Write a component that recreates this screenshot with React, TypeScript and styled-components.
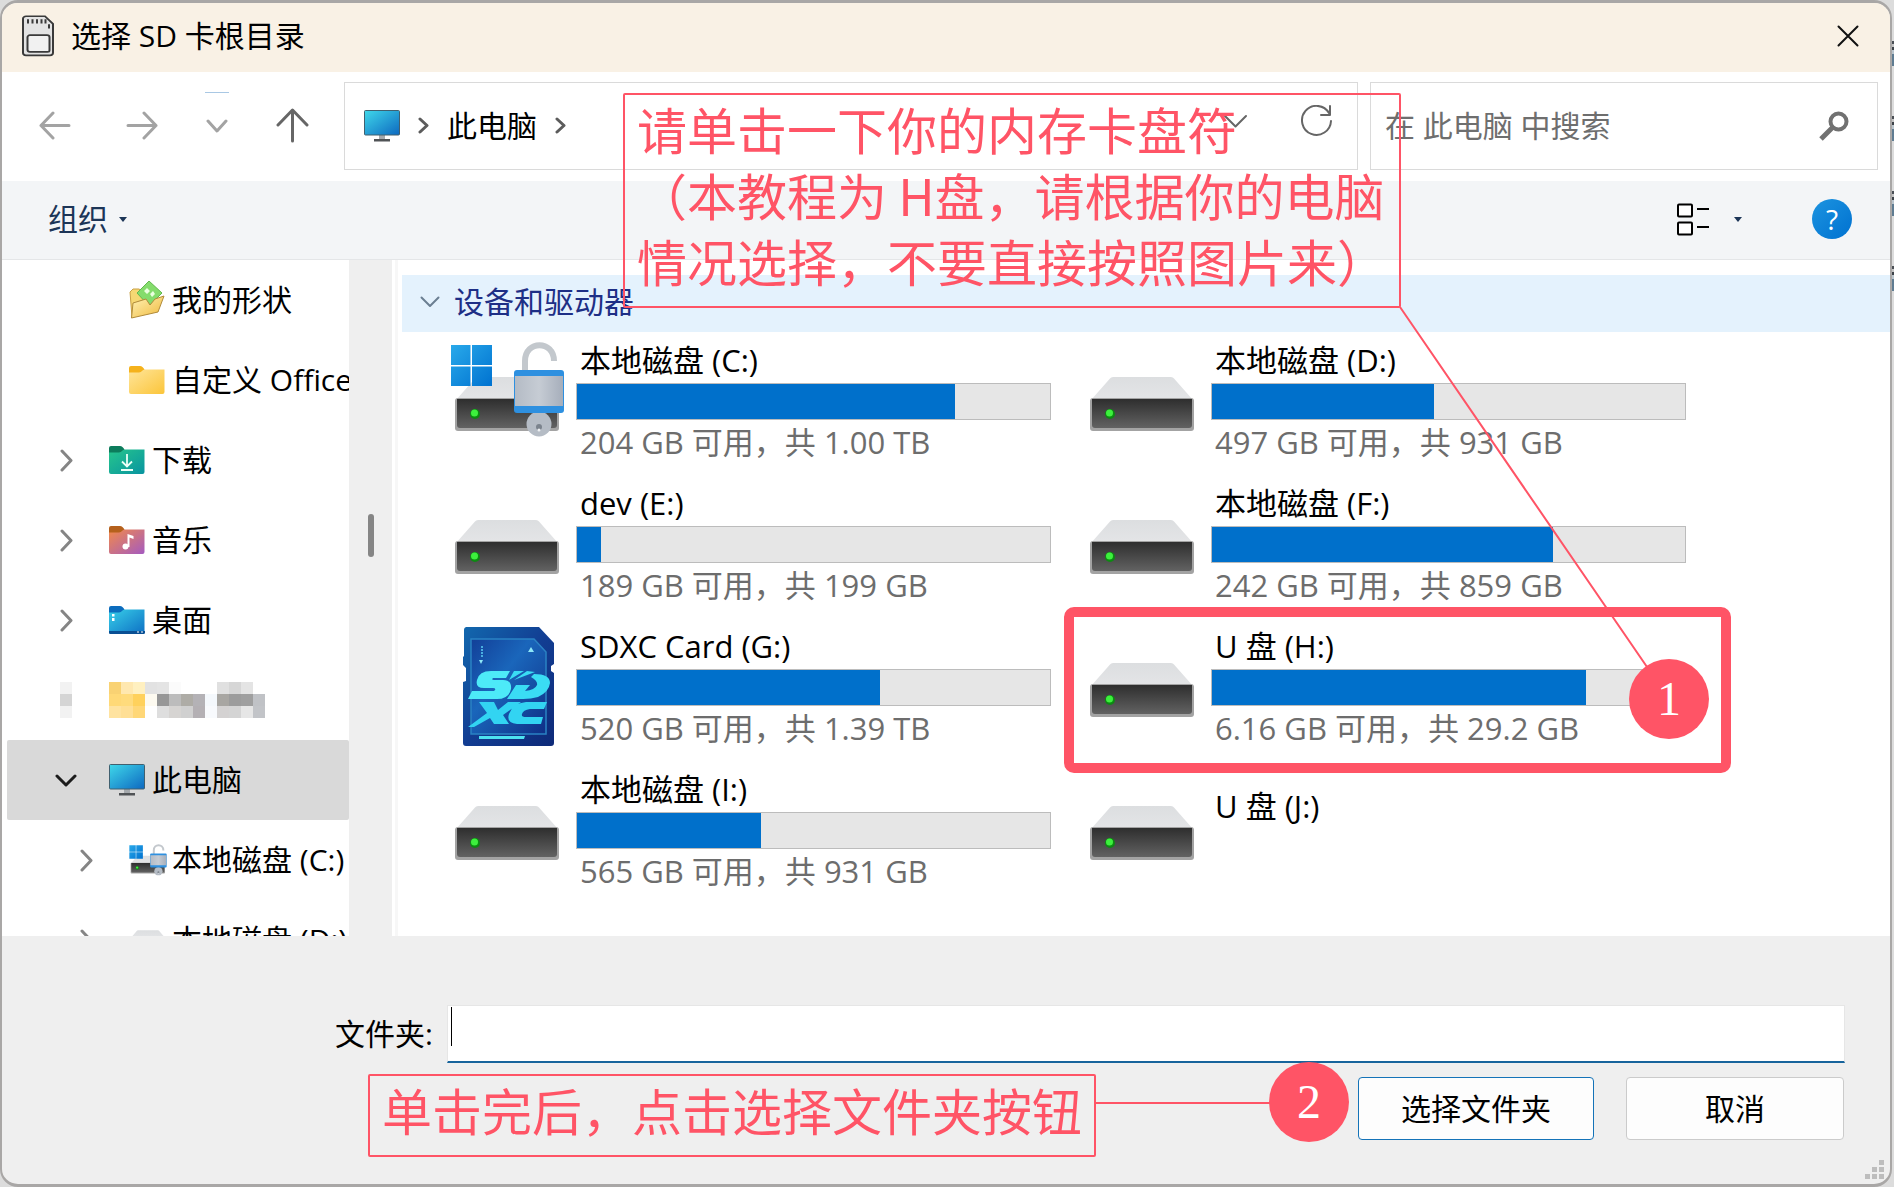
import React from "react";
import styled, { createGlobalStyle } from "styled-components";

const GlobalStyle = createGlobalStyle`
  * { box-sizing: border-box; }
  body {
    margin: 0;
    background:
      repeating-linear-gradient(180deg, transparent 0 41px, #4a4f55 41px 44px, #c4c4c4 44px 47px, #3c4248 47px 50px, #b9c4cc 50px 54px, #5f7c92 54px 66px, transparent 66px 75px) 0 0 / 100% 300px no-repeat,
      #dcdcdc;
    color: #000;
    font-family: "Open Sans", "Noto Sans CJK SC", sans-serif;
    font-size: 30px;
    line-height: 36px;
  }
  button, input { font: inherit; color: inherit; }
  svg { display: block; flex: none; }
`;

const RED = "#ff5466";

const Dialog = styled.main`
  position: relative;
  display: flex;
  flex-direction: column;
  height: 100vh;
  margin-right: 2px;
  border: 3px solid #a9a7a6;
  border-left-width: 2px;
  border-right-width: 2px;
  border-radius: 18px;
  background: #efefef;
  overflow: hidden;
`;

const TitleBar = styled.header`
  display: flex;
  align-items: center;
  gap: 16px;
  height: 69px;
  flex: none;
  padding: 0 31px 3px 20px;
  background: #f9f1e5;
`;

const Title = styled.h1`
  flex: 1;
  margin: 0;
  font-size: 30px;
  font-weight: 400;
`;

const IconButton = styled.button`
  display: flex;
  align-items: center;
  justify-content: center;
  flex: none;
  padding: 0;
  border: 0;
  background: transparent;
`;

const NavRow = styled.div`
  display: flex;
  align-items: center;
  gap: 12px;
  height: 109px;
  flex: none;
  padding: 0 12px 2px 36px;
  background: #fff;
`;

const NavButtons = styled.nav`
  display: grid;
  grid-template-columns: 88px 79px 71px 33px;
  align-items: center;
  justify-items: start;
  margin-right: 23px;
`;

const RecentButton = styled(IconButton)`
  height: 68px;
  border-top: 1px solid #a9c8e4;
`;

const FieldBox = styled.div`
  display: flex;
  align-items: center;
  height: 88px;
  border: 1px solid #dadada;
  background: #fff;
`;

const AddressBox = styled(FieldBox)`
  flex: 1;
  min-width: 0;
  padding: 0 24px 0 19px;
  gap: 18px;
`;

const AddressTools = styled.div`
  display: flex;
  gap: 52px;
  margin-left: auto;
  padding-bottom: 8px;
`;

const SearchBox = styled(FieldBox)`
  flex: 0 1 508px;
  min-width: 0;
  padding: 0 28px 0 14px;
`;

const SearchInput = styled.input`
  flex: 1;
  min-width: 0;
  padding: 0;
  border: 0;
  outline: 0;
  background: transparent;
  &::placeholder { color: #6e6e6e; opacity: 1; }
`;

const Toolbar = styled.div`
  display: flex;
  align-items: center;
  height: 79px;
  flex: none;
  padding: 0 38px 2px 46px;
  border-bottom: 1px solid #e4e6e8;
  background: #f3f5f7;
  color: #1c3557;
`;

const ToolButton = styled(IconButton)`
  gap: 11px;
`;

const ToolbarRight = styled.div`
  display: flex;
  align-items: center;
  gap: 70px;
  margin-left: auto;
`;

const ViewButton = styled(IconButton)`
  gap: 24px;
`;

const HelpButton = styled(IconButton)`
  width: 40px;
  height: 40px;
  border-radius: 50%;
  background: linear-gradient(135deg, #1c94e0, #0071d0);
  color: #fff;
  font-size: 28px;
`;

const Browser = styled.div`
  display: flex;
  flex: 1;
  min-height: 0;
  background: #fff;
`;

const Sidebar = styled.aside`
  width: 347px;
  flex: none;
  padding-left: 5px;
  overflow: hidden;
`;

const TreeRow = styled.button<{ $level: number; $selected?: boolean }>`
  display: flex;
  align-items: center;
  width: 100%;
  height: 80px;
  padding: 0 0 0 ${(p) => (p.$level === 2 ? 68 : 48)}px;
  border: 0;
  border-radius: 2px;
  background: ${(p) => (p.$selected ? "#d9d9d9" : "transparent")};
  text-align: left;
  white-space: nowrap;
  overflow: hidden;
`;

const ExpanderSlot = styled.span`
  display: flex;
  justify-content: center;
  width: 22px;
  margin-right: 32px;
  flex: none;
`;

const TreeIconSlot = styled.span`
  display: flex;
  width: 43px;
  flex: none;
`;

const ScrollTrack = styled.div`
  display: flex;
  justify-content: center;
  width: 43px;
  flex: none;
  padding-top: 254px;
  background: #efefef;
`;

const ScrollThumb = styled.div`
  width: 6px;
  height: 43px;
  border-radius: 3px;
  background: #858585;
`;

const Content = styled.section`
  flex: 1;
  min-width: 0;
  margin-left: 3px;
  padding: 15px 0 0 4px;
  border-left: 3px solid #f7f7f7;
`;

const GroupHeader = styled.button`
  display: flex;
  align-items: center;
  gap: 14px;
  width: 100%;
  height: 57px;
  padding: 0 18px 3px;
  border: 0;
  background: #e4f2fd;
  color: #1e2f86;
`;

const DriveGrid = styled.ul`
  display: grid;
  grid-template-columns: repeat(auto-fill, 635px);
  grid-auto-rows: 143px;
  margin: 0;
  padding: 8px 0 0 46px;
  list-style: none;
`;

const DriveTile = styled.li`
  position: relative;
  display: flex;
  align-items: flex-start;
  gap: 8px;
`;

const DriveIconSlot = styled.span`
  display: flex;
  flex: none;
  width: 120px;
  height: 120px;
`;

const DriveBody = styled.div<{ $labelOnly?: boolean }>`
  display: flex;
  flex-direction: column;
  padding-top: ${(p) => (p.$labelOnly ? 19 : 2)}px;
  font-size: 31px;
`;

const DriveText = styled.span<{ $muted?: boolean }>`
  padding-left: 4px;
  color: ${(p) => (p.$muted ? "#6d6d6d" : "#000")};
  white-space: nowrap;
`;

const Bar = styled.div`
  width: 475px;
  height: 37px;
  margin: 5px 0 4px;
  border: 1px solid #bcbcbc;
  background: #e6e6e6;
`;

const BarFill = styled.div`
  height: 100%;
  background: #0070cb;
`;

const TileHighlight = styled.div`
  position: absolute;
  left: -19px;
  top: -19px;
  width: 667px;
  height: 166px;
  border: 10px solid ${RED};
  border-radius: 10px;
`;

const Footer = styled.footer`
  display: flex;
  flex-direction: column;
  gap: 14px;
  height: 248px;
  flex: none;
  padding: 69px 45px 0 333px;
`;

const FolderRow = styled.div`
  display: flex;
  align-items: center;
  gap: 14px;
`;

const FolderLabel = styled.label`
  width: 98px;
  flex: none;
  white-space: nowrap;
`;

const FolderField = styled.div`
  position: relative;
  flex: 1;
`;

const FolderInput = styled.input`
  display: block;
  width: 100%;
  height: 58px;
  padding: 0 4px;
  border: 1px solid #e6e6e6;
  border-bottom: 2px solid #17649c;
  border-radius: 0;
  outline: 0;
  background: #fff;
`;

const TextCursor = styled.span`
  position: absolute;
  left: 4px;
  top: 2px;
  width: 1px;
  height: 39px;
  background: #000;
`;

const Actions = styled.div`
  display: flex;
  justify-content: flex-end;
  gap: 32px;
  padding-right: 1px;
`;

const ActionButton = styled.button<{ $primary?: boolean }>`
  width: ${(p) => (p.$primary ? 236 : 218)}px;
  height: 63px;
  padding: 0;
  border: 1px solid ${(p) => (p.$primary ? "#1473b8" : "#cbcbcb")};
  border-radius: 4px;
  background: #fdfdfd;
`;

const Grip = styled.svg`
  position: absolute;
  right: 6px;
  bottom: 5px;
`;

const Note = styled.p<{ $x: number; $y: number; $w: number }>`
  position: absolute;
  left: ${(p) => p.$x}px;
  top: ${(p) => p.$y}px;
  width: ${(p) => p.$w}px;
  margin: 0;
  padding: 0 0 13px 12px;
  border: 2px solid ${RED};
  border-radius: 2px;
  color: ${RED};
  font-family: "Noto Sans CJK SC", sans-serif;
  font-size: 50px;
  line-height: 66px;
  white-space: pre;
  pointer-events: none;
`;

const Connector = styled.svg`
  position: absolute;
  left: 0;
  top: 0;
  pointer-events: none;
`;

const Step = styled.span<{ $x: number; $y: number }>`
  position: absolute;
  left: ${(p) => p.$x}px;
  top: ${(p) => p.$y}px;
  display: flex;
  align-items: center;
  justify-content: center;
  width: 80px;
  height: 80px;
  border-radius: 50%;
  background: ${RED};
  color: #fff;
  font-family: "Liberation Serif", serif;
  font-size: 48px;
`;

const Stroke = ({ w, h, d, color, sw = 3 }: { w: number; h: number; d: string; color: string; sw?: number }) => (
  <svg width={w} height={h} viewBox={`0 0 ${w} ${h}`} fill="none" stroke={color} strokeWidth={sw} strokeLinecap="round" strokeLinejoin="round">
    <path d={d} />
  </svg>
);

const Caret = () => (
  <svg width="8" height="5" viewBox="0 0 8 5"><path d="M0 0h8L4 5z" fill="#1c3557" /></svg>
);

const MemoryCardIcon = () => (
  <svg width="33" height="42" viewBox="0 0 33 50" preserveAspectRatio="none" fill="#f1f1f1" stroke="#3a3a3a" strokeWidth="2">
    <path d="M4 1.500h19l8 9V45a3 3 0 0 1-3 3H4a3 3 0 0 1-3-3V4.500a3 3 0 0 1 3-3z" fill="#e3e3e3" />
    <path d="M6 5v5M10.500 5v5M15 5v5M19.500 5v5M23.500 5v5M27 11v5" />
    <path d="M8 24h17a2.500 2.500 0 0 1 2.500 2.500V42a2 2 0 0 1-2 2H8a2.500 2.500 0 0 1-2.500-2.500v-15A2.500 2.500 0 0 1 8 24z" />
  </svg>
);

const MonitorIcon = () => (
  <svg width="36" height="32" viewBox="0 0 36 32">
    <defs>
      <linearGradient id="screen" x1="0" y1="0" x2="1" y2="1">
        <stop offset="0" stopColor="#3fd8ea" /><stop offset="1" stopColor="#0d68c0" />
      </linearGradient>
    </defs>
    <path d="M15 25h6v5h-6z" fill="#a5a9ad" />
    <rect x="0.5" y="0.5" width="35" height="24.5" rx="1" fill="url(#screen)" stroke="#41606f" />
    <path d="M10 29h16v2.500H10z" fill="#505356" />
  </svg>
);

const FolderIcon = ({ id, tab, from, to, children }: { id: string; tab: string; from: string; to: string; children?: React.ReactNode }) => (
  <svg width="36" height="28" viewBox="0 0 36 28">
    <defs>
      <linearGradient id={id} x1="0" y1="0" x2="1" y2="1">
        <stop offset="0" stopColor={from} /><stop offset="1" stopColor={to} />
      </linearGradient>
    </defs>
    <path d="M0 2a2 2 0 0 1 2-2h9c2 0 3 1.500 4.500 3.500V7H0z" fill={tab} />
    <path d="M0 6.500h10c3 0 3-3 6-3h19.500V26a2 2 0 0 1-2 2H2a2 2 0 0 1-2-2z" fill={`url(#${id})`} />
    {children}
  </svg>
);

const ShapesIcon = () => (
  <svg width="36" height="38" viewBox="0 0 36 38">
    <defs>
      <linearGradient id="shapes" x1="0" y1="0" x2="1" y2="1">
        <stop offset="0" stopColor="#fff3b8" /><stop offset="1" stopColor="#f0b93c" />
      </linearGradient>
    </defs>
    <path d="M1 11l3-3h6l3 2 12 2v18L3 36z" fill="#f6d873" stroke="#c9a044" />
    <path d="M20 0l13 12-13 13L8 12z" fill="#84dc6c" stroke="#62b84d" />
    <path d="M15 10l3-3 3 3-3 3zM21 13l3-3 2 3-3 3z" fill="#eaffdf" />
    <path d="M4 22l13-4 4 6 5-6 9-3-6 16L2.500 37z" fill="url(#shapes)" stroke="#b08a3a" />
  </svg>
);

const MosaicIcon = () => {
  const rows = [
    ["#f9d273", "#ffe8b0", "#fff0c0", "#e2e2e2", "#e4e4e4", "#fbfbfb", "#fff", "#fff", "#fff", "#e0e0e0", "#d6d6d6", "#e4e4e4", "#fff"],
    ["#ffd977", "#ffdb7c", "#ffd15c", "#fdfaf0", "#979797", "#bcbcbc", "#aeaca6", "#b4b2b6", "#f4f8fc", "#a8a6a2", "#9c9c9c", "#9f9f9f", "#c0c2c6"],
    ["#ffe3a0", "#ffdf95", "#ffd777", "#fff", "#dedede", "#d6d4d2", "#d0d0d0", "#b4b0b4", "#f8fafd", "#d4d2d2", "#d4d4d4", "#e6e6e6", "#c2c4c8"],
  ];
  return (
    <svg width="156" height="36" viewBox="0 0 156 36" shapeRendering="crispEdges">
      {rows.map((row, y) => row.map((c, x) => <rect key={`${x}-${y}`} x={x * 12} y={y * 12} width="12" height="12" fill={c} />))}
    </svg>
  );
};

const MosaicArrow = () => (
  <svg width="12" height="36" viewBox="0 0 12 36">
    <path d="M0 0h12v36H0z" fill="#f2f2f2" /><path d="M0 12h12v12H0z" fill="#d5d5d5" />
  </svg>
);

const HiddenDefs = styled.svg`
  position: absolute;
`;

const DriveDefs = () => (
  <HiddenDefs width="0" height="0">
    <defs>
      <linearGradient id="driveTop" x1="0" y1="0" x2="0" y2="1">
        <stop offset="0" stopColor="#dcdee0" /><stop offset="1" stopColor="#e4e5e7" />
      </linearGradient>
      <linearGradient id="driveFront" x1="0" y1="0" x2="0" y2="1">
        <stop offset="0" stopColor="#2e2e2e" /><stop offset="1" stopColor="#626262" />
      </linearGradient>
      <linearGradient id="winTile" x1="0" y1="0" x2="1" y2="1">
        <stop offset="0" stopColor="#29a9ea" /><stop offset="1" stopColor="#0072d0" />
      </linearGradient>
      <linearGradient id="lockBody" x1="0" y1="0" x2="1" y2="0">
        <stop offset="0" stopColor="#b4bbc5" /><stop offset="0.5" stopColor="#c6ccd4" /><stop offset="1" stopColor="#a6aebb" />
      </linearGradient>
      <linearGradient id="cardBody" x1="0" y1="0" x2="1" y2="1">
        <stop offset="0" stopColor="#1268ae" /><stop offset="0.5" stopColor="#123d92" /><stop offset="1" stopColor="#0e2a78" />
      </linearGradient>
      <linearGradient id="cardFace" x1="0" y1="0" x2="1" y2="1">
        <stop offset="0" stopColor="#123f98" /><stop offset="0.4" stopColor="#1a66bb" /><stop offset="1" stopColor="#0f2f86" />
      </linearGradient>
    </defs>
  </HiddenDefs>
);

const DriveShape = () => (
  <g>
    <path d="M30 37h58q2 0 3 1.500L110 60H8L27 38.500q1-1.500 3-1.500z" fill="url(#driveTop)" />
    <rect x="7" y="58" width="104" height="33" rx="3" fill="#a3a3a3" />
    <path d="M9 59h100v26a3 3 0 0 1-3 3H12a3 3 0 0 1-3-3z" fill="url(#driveFront)" />
    <circle cx="27" cy="74" r="5" fill="#0d8a12" /><circle cx="26.500" cy="73" r="3.500" fill="#3df03d" />
  </g>
);

const DriveIcon = () => <svg width="120" height="120" viewBox="0 0 120 120"><DriveShape /></svg>;

const SystemDriveIcon = ({ width = 120, height = 120, box = "0 0 120 120" }: { width?: number; height?: number; box?: string }) => (
  <svg width={width} height={height} viewBox={box}>
    <DriveShape />
    <path d="M3 5h19.500v20H3zM24 5h20v20H24zM3 26.500h19.500V46H3zM24 26.500h20V46H24z" fill="url(#winTile)" />
    <path d="M77 32V21c0-21 29-21 29 0" fill="none" stroke="#c3c8cd" strokeWidth="6" />
    <circle cx="91" cy="84" r="12.500" fill="#b5bcc5" /><circle cx="91" cy="87" r="3" fill="#7b838d" /><circle cx="91" cy="90" r="1.500" fill="#eef0f2" />
    <rect x="66" y="30" width="50" height="43" rx="3" fill="#2e90e0" />
    <path d="M67 36h48v30H67z" fill="url(#lockBody)" />
  </svg>
);

const SdxcIcon = () => (
  <svg width="120" height="130" viewBox="0 0 120 130">
    <path d="M18 1h73l15 16v21l-3 2v5l3 2v70a3 3 0 0 1-3 3H18a3 3 0 0 1-3-3V56l3-1V42l-3-3V31l1-1V4a3 3 0 0 1 2-3z" fill="url(#cardBody)" />
    <path d="M23 13h63l12 13v82H23z" fill="url(#cardFace)" stroke="#2a82c4" strokeWidth="1.500" />
    <path d="M31 34l2 4 2-4zM80 26l3-5 3 5z" fill="#8fe8f8" />
    <path d="M34 20v12" stroke="#49aee0" strokeWidth="2" strokeDasharray="2 1" />
    <path d="M62 45H43q-12 0-14 9-2 8 7 8h9q3 0 2 2l-1 1H24l-4 8h29q12 0 14-10 1-9-8-9h-9q-3 0-1-2h13z" fill="#4deaf8" />
    <path d="M66 45l-5 9 15-9zM79 45l-13 9 21-8zM86 48q16 0 16 9-1 9-12 14-7 2-15 2H59l9-14h14l-5 6q10-1 12-6 1-4-6-8z" fill="#3adcf4" />
    <path d="M31 76h15l4 8 10-8h13L55 89l6 9H46l-4-6-16 9h-6l19-14zM99 76l-3 7H82q-7 1-8 5-1 3 4 3h17l-2 7H69q-11-1-8-10 4-11 17-12z" fill="#32d4f2" />
    <path d="M31 110h46l-1 3H31z" fill="#4de2f0" />
  </svg>
);

type TreeItem = { label: string; level: number; icon: React.ReactNode; expander?: React.ReactNode; selected?: boolean };

const closed = <Stroke w={13} h={23} d="M2 2l9 9.500-9 9.500" color="#858585" />;

const tree: TreeItem[] = [
  { label: "我的形状", level: 2, icon: <ShapesIcon /> },
  { label: "自定义 Office", level: 2, icon: <FolderIcon id="plain" tab="#f5b21c" from="#ffe59a" to="#fbc53a" /> },
  {
    label: "下载", level: 1, expander: closed,
    icon: (
      <FolderIcon id="downloads" tab="#0d7c5c" from="#27c68c" to="#0894a0">
        <path d="M18 8v12M13 15.500l5 5 5-5M12 24h12" fill="none" stroke="#eafff6" strokeWidth="1.800" />
      </FolderIcon>
    ),
  },
  {
    label: "音乐", level: 1, expander: closed,
    icon: (
      <FolderIcon id="music" tab="#b5611c" from="#f28a4a" to="#a45ac0">
        <circle cx="16.500" cy="20.500" r="3" fill="#fff" /><path d="M18.500 21V8l6 2v3l-4-1.500V21z" fill="#fff" />
      </FolderIcon>
    ),
  },
  {
    label: "桌面", level: 1, expander: closed,
    icon: (
      <FolderIcon id="desktop" tab="#0c6cbd" from="#38cfe8" to="#0d6fc4">
        <path d="M3 8h2.500v2.500H3zM3 12h2.500v3H3z" fill="#fff" />
        <path d="M0 25h36v1.500q0 1.500-1.500 1.500h-33Q0 28 0 26.500z" fill="#0a4f93" />
        <path d="M28 25.500h2v1h-2zM32 25.500h2v1h-2z" fill="#fff" />
      </FolderIcon>
    ),
  },
  { label: "", level: 1, expander: <MosaicArrow />, icon: <MosaicIcon /> },
  { label: "此电脑", level: 1, selected: true, expander: <Stroke w={22} h={13} d="M2 2l9 9 9-9" color="#1c1c1c" />, icon: <MonitorIcon /> },
  { label: "本地磁盘 (C:)", level: 2, expander: closed, icon: <SystemDriveIcon width={38} height={34} box="2 1 115 98" /> },
  {
    label: "本地磁盘 (D:)", level: 2, expander: closed,
    icon: <svg width="38" height="20" viewBox="4 36 110 58"><DriveShape /></svg>,
  },
];

type Drive = { name: string; info?: string; used?: number; icon?: React.ReactNode; target?: boolean };

const drives: Drive[] = [
  { name: "本地磁盘 (C:)", info: "204 GB 可用，共 1.00 TB", used: 80, icon: <SystemDriveIcon /> },
  { name: "本地磁盘 (D:)", info: "497 GB 可用，共 931 GB", used: 47 },
  { name: "dev (E:)", info: "189 GB 可用，共 199 GB", used: 5 },
  { name: "本地磁盘 (F:)", info: "242 GB 可用，共 859 GB", used: 72 },
  { name: "SDXC Card (G:)", info: "520 GB 可用，共 1.39 TB", used: 64, icon: <SdxcIcon /> },
  { name: "U 盘 (H:)", info: "6.16 GB 可用，共 29.2 GB", used: 79, target: true },
  { name: "本地磁盘 (I:)", info: "565 GB 可用，共 931 GB", used: 39 },
  { name: "U 盘 (J:)" },
];

export default function App() {
  return (
    <>
      <GlobalStyle />
      <DriveDefs />
      <Dialog>
        <TitleBar>
          <MemoryCardIcon />
          <Title>选择 SD 卡根目录</Title>
          <IconButton aria-label="关闭">
            <Stroke w={22} h={22} d="M1.500 1.500l19 19M20.500 1.500l-19 19" color="#111" sw={2} />
          </IconButton>
        </TitleBar>

        <NavRow>
          <NavButtons>
            <IconButton aria-label="后退"><Stroke w={33} h={29} d="M15 2L3 14.500 15 27M3 14.500h28" color="#a3a3a3" /></IconButton>
            <IconButton aria-label="前进"><Stroke w={33} h={29} d="M18 2l12 12.500L18 27M30 14.500H2" color="#a3a3a3" /></IconButton>
            <RecentButton aria-label="最近的位置"><Stroke w={24} h={14} d="M3 2l9 10 9-10" color="#a3a3a3" /></RecentButton>
            <IconButton aria-label="上移"><Stroke w={33} h={35} d="M16.500 33V3M2 17L16.500 2 31 17" color="#666" /></IconButton>
          </NavButtons>
          <AddressBox>
            <MonitorIcon />
            <Stroke w={11} h={17} d="M2 2l7 6.500-7 6.500" color="#5c5c5c" />
            <span>此电脑</span>
            <Stroke w={11} h={17} d="M2 2l7 6.500-7 6.500" color="#5c5c5c" />
            <AddressTools>
              <IconButton aria-label="展开"><Stroke w={25} h={15} d="M2 2l10.500 10.500L23 2" color="#666" sw={2} /></IconButton>
              <IconButton aria-label="刷新"><Stroke w={33} h={33} d="M29 8A14.500 14.500 0 1 0 31 16M30 1v9h-9" color="#666" sw={2} /></IconButton>
            </AddressTools>
          </AddressBox>
          <SearchBox>
            <SearchInput aria-label="搜索" placeholder="在 此电脑 中搜索" />
            <svg width="30" height="30" viewBox="0 0 30 30" fill="none" stroke="#717171">
              <circle cx="19.500" cy="10.500" r="8" strokeWidth="4" /><path d="M14 16L2 28" strokeWidth="5" />
            </svg>
          </SearchBox>
        </NavRow>

        <Toolbar>
          <ToolButton>组织<Caret /></ToolButton>
          <ToolbarRight>
            <ViewButton aria-label="更改视图">
              <svg width="33" height="33" viewBox="0 0 33 33" fill="#fff" stroke="#000" strokeWidth="2">
                <rect x="1" y="1.500" width="14" height="12" rx="1" /><rect x="1" y="19.500" width="14" height="12" rx="1" />
                <path d="M20 6h12M20 24h12" />
              </svg>
              <Caret />
            </ViewButton>
            <HelpButton aria-label="帮助">?</HelpButton>
          </ToolbarRight>
        </Toolbar>

        <Browser>
          <Sidebar>
            {tree.map((item, i) => (
              <TreeRow key={i} $level={item.level} $selected={item.selected} aria-label={item.label || "文件夹"}>
                <ExpanderSlot>{item.expander}</ExpanderSlot>
                <TreeIconSlot>{item.icon}</TreeIconSlot>
                {item.label}
              </TreeRow>
            ))}
          </Sidebar>
          <ScrollTrack><ScrollThumb /></ScrollTrack>
          <Content>
            <GroupHeader>
              <Stroke w={20} h={12} d="M1.500 1.500l8.500 8.500 8.500-8.500" color="#6b7f92" sw={2} />
              设备和驱动器
            </GroupHeader>
            <DriveGrid>
              {drives.map((d) => (
                <DriveTile key={d.name}>
                  <DriveIconSlot>{d.icon ?? <DriveIcon />}</DriveIconSlot>
                  <DriveBody $labelOnly={d.used === undefined}>
                    <DriveText>{d.name}</DriveText>
                    {d.used !== undefined && <Bar><BarFill style={{ width: `${d.used}%` }} /></Bar>}
                    {d.info && <DriveText $muted>{d.info}</DriveText>}
                  </DriveBody>
                  {d.target && <TileHighlight />}
                </DriveTile>
              ))}
            </DriveGrid>
          </Content>
        </Browser>

        <Footer>
          <FolderRow>
            <FolderLabel htmlFor="folder">文件夹:</FolderLabel>
            <FolderField>
              <FolderInput id="folder" type="text" />
              <TextCursor />
            </FolderField>
          </FolderRow>
          <Actions>
            <ActionButton $primary>选择文件夹</ActionButton>
            <ActionButton>取消</ActionButton>
          </Actions>
        </Footer>

        <Grip width="19" height="19" viewBox="0 0 19 19" fill="#bdbdbd">
          <path d="M14 0h5v5h-5zM7 7h5v5H7zM14 7h5v5h-5zM0 14h5v5H0zM7 14h5v5H7zM14 14h5v5h-5z" />
        </Grip>

        <Connector width="1888" height="1181" viewBox="0 0 1888 1181" stroke={RED} strokeWidth="2">
          <path d="M1398 304L1667 696M1094 1100H1270" />
        </Connector>
        <Note $x={621} $y={90} $w={778}>{"请单击一下你的内存卡盘符\n（本教程为 H盘，请根据你的电脑\n情况选择，不要直接按照图片来）"}</Note>
        <Note $x={366} $y={1071} $w={728}>单击完后，点击选择文件夹按钮</Note>
        <Step $x={1627} $y={656}>1</Step>
        <Step $x={1267} $y={1059}>2</Step>
      </Dialog>
    </>
  );
}
